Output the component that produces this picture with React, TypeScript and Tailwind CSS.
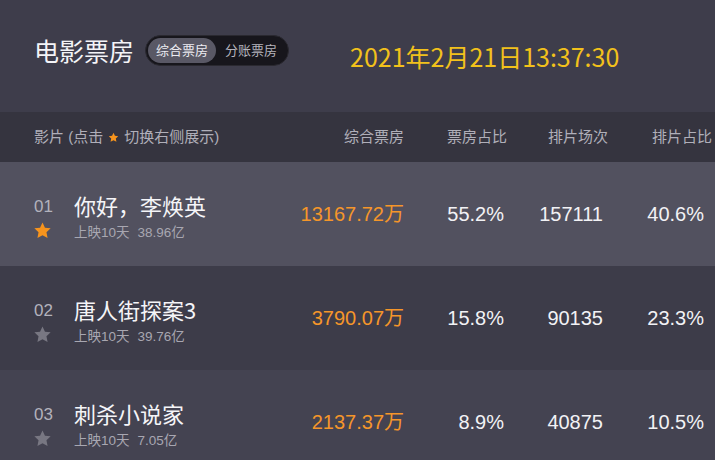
import React from "react";

const Star = ({ className }: { className: string }) => (
  <svg viewBox="0 0 24 24" className={className} fill="currentColor">
    <path d="M12 1.8l3.1 6.6 7.2.9-5.3 5 1.4 7.1L12 17.9l-6.4 3.5 1.4-7.1-5.3-5 7.2-.9z" />
  </svg>
);

type Movie = {
  rank: string;
  name: string;
  days: string;
  total: string;
  box: string;
  boxRate: string;
  shows: string;
  showRate: string;
  fav: boolean;
  bg: string;
};

const movies: Movie[] = [
  {
    rank: "01",
    name: "你好，李焕英",
    days: "上映10天",
    total: "38.96亿",
    box: "13167.72万",
    boxRate: "55.2%",
    shows: "157111",
    showRate: "40.6%",
    fav: true,
    bg: "bg-[#52515f]",
  },
  {
    rank: "02",
    name: "唐人街探案3",
    days: "上映10天",
    total: "39.76亿",
    box: "3790.07万",
    boxRate: "15.8%",
    shows: "90135",
    showRate: "23.3%",
    fav: false,
    bg: "bg-[#3d3c49]",
  },
  {
    rank: "03",
    name: "刺杀小说家",
    days: "上映10天",
    total: "7.05亿",
    box: "2137.37万",
    boxRate: "8.9%",
    shows: "40875",
    showRate: "10.5%",
    fav: false,
    bg: "bg-[#444351]",
  },
];

const cjk = "font-['Noto_Sans_CJK_SC',sans-serif]";
const arial = "font-['Liberation_Sans','Noto_Sans_CJK_SC',sans-serif]";

export default function App() {
  return (
    <div className={`w-[715px] h-[460px] overflow-hidden bg-[#444351] ${arial}`}>
      {/* Top header */}
      <div className="h-[112px] bg-[#3e3d4b]">
        <div className="h-[100px] flex items-center pl-[34px]">
          <div className={`text-[25px] leading-none text-[#f4f4f7] ${cjk}`}>电影票房</div>
          <div className="ml-[11px] flex items-center h-[31px] rounded-full bg-[#17161c] border border-[#2a2930] p-[2px]">
            <div className={`h-full flex items-center px-[8px] rounded-full bg-[#595865] text-[13px] text-[#ececf1] ${cjk}`}>
              综合票房
            </div>
            <div className={`h-full flex items-center px-[9px] text-[13px] text-[#b5b4bd] ${cjk}`}>
              分账票房
            </div>
          </div>
          <div className={`ml-[61px] mt-[12px] text-[25px] leading-none text-[#f2c11b] ${cjk}`}>
            2021年2月21日13:37:30
          </div>
        </div>
      </div>

      {/* Table header */}
      <div className="h-[50px] bg-[#35343f] flex items-center text-[15px] text-[#b0afb9]">
        <div className="w-[290px] pl-[34px] flex items-center">
          <span>影片 (点击</span>
          <Star className="w-[11px] h-[11px] mx-[5px] text-[#f7941d]" />
          <span>切换右侧展示)</span>
        </div>
        <div className="w-[114px] text-right">综合票房</div>
        <div className="w-[103px] text-right">票房占比</div>
        <div className="w-[101px] text-right">排片场次</div>
        <div className="w-[104px] text-right">排片占比</div>
      </div>

      {/* Rows */}
      {movies.map((m) => (
        <div key={m.rank} className={`h-[104px] ${m.bg} flex items-center`}>
          <div className="w-[290px] pl-[34px] pt-[4px] flex items-start">
            <div className="w-[40px] flex flex-col pt-[6px]">
              <span className="text-[17px] leading-[20px] text-[#b3b2bc]">{m.rank}</span>
              <Star
                className={`w-[19px] h-[19px] mt-[4px] -ml-[1px] ${m.fav ? "text-[#f7941d]" : "text-[#787782]"}`}
              />
            </div>
            <div className="flex flex-col">
              <span className={`text-[22px] leading-[28px] text-[#f5f5f8] ${cjk}`}>{m.name}</span>
              <span className="text-[13.5px] leading-[18px] text-[#a8a7b1] mt-[5px]">
                {m.days}
                <span className="ml-[8px]">{m.total}</span>
              </span>
            </div>
          </div>
          <div className="w-[114px] text-right text-[20px] text-[#f5962a]">{m.box}</div>
          <div className="w-[103px] text-right pr-[3px] text-[20px] text-[#f2f2f5]">{m.boxRate}</div>
          <div className="w-[101px] text-right pr-[5px] text-[20px] text-[#f2f2f5]">{m.shows}</div>
          <div className="w-[104px] text-right pr-[8px] text-[20px] text-[#f2f2f5]">{m.showRate}</div>
        </div>
      ))}
    </div>
  );
}
